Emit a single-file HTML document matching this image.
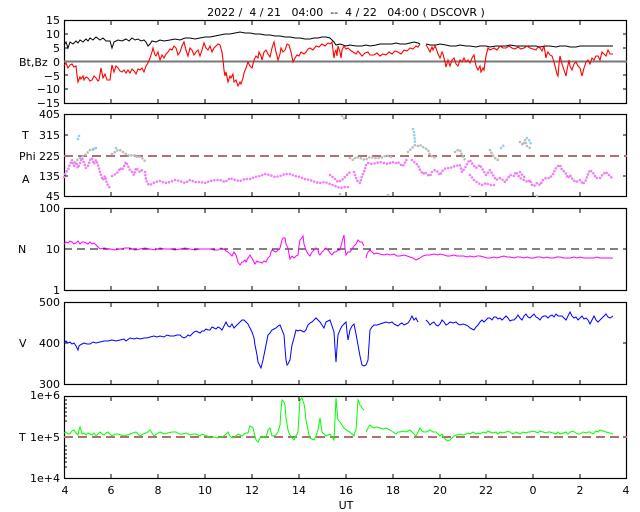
<!DOCTYPE html>
<html><head><meta charset="utf-8"><style>
html,body{margin:0;padding:0;background:#fff;}
svg{display:block;font-family:"DejaVu Sans","Liberation Sans",sans-serif;font-size:11px;}
</style></head><body>
<svg width="640" height="512" viewBox="0 0 640 512" xmlns="http://www.w3.org/2000/svg">
<text x="346" y="16" text-anchor="middle" fill="#000" style="white-space:pre" xml:space="preserve">2022 /  4 / 21   04:00  --  4 / 22   04:00 ( DSCOVR )</text>

<g fill="none" stroke="#000" stroke-width="1.2">
<rect x="64.5" y="20.5" width="562" height="83"/>
<rect x="64.5" y="114.5" width="562" height="82"/>
<rect x="64.5" y="208.5" width="562" height="82"/>
<rect x="64.5" y="302.5" width="562" height="82"/>
<rect x="64.5" y="396.5" width="562" height="82"/>
</g>
<g stroke="#000" stroke-width="1">
<path d="M111,20v5M158,20v5M205,20v5M252,20v5M299,20v5M346,20v5M393,20v5M440,20v5M486,20v5M533,20v5M580,20v5
M111,104v-5M158,104v-5M205,104v-5M252,104v-5M299,104v-5M346,104v-5M393,104v-5M440,104v-5M486,104v-5M533,104v-5M580,104v-5
M111,114v5M158,114v5M205,114v5M252,114v5M299,114v5M346,114v5M393,114v5M440,114v5M486,114v5M533,114v5M580,114v5
M111,197v-5M158,197v-5M205,197v-5M252,197v-5M299,197v-5M346,197v-5M393,197v-5M440,197v-5M486,197v-5M533,197v-5M580,197v-5
M111,208v5M158,208v5M205,208v5M252,208v5M299,208v5M346,208v5M393,208v5M440,208v5M486,208v5M533,208v5M580,208v5
M111,291v-5M158,291v-5M205,291v-5M252,291v-5M299,291v-5M346,291v-5M393,291v-5M440,291v-5M486,291v-5M533,291v-5M580,291v-5
M111,302v5M158,302v5M205,302v5M252,302v5M299,302v5M346,302v5M393,302v5M440,302v5M486,302v5M533,302v5M580,302v5
M111,385v-5M158,385v-5M205,385v-5M252,385v-5M299,385v-5M346,385v-5M393,385v-5M440,385v-5M486,385v-5M533,385v-5M580,385v-5
M111,396v5M158,396v5M205,396v5M252,396v5M299,396v5M346,396v5M393,396v5M440,396v5M486,396v5M533,396v5M580,396v5
M111,479v-5M158,479v-5M205,479v-5M252,479v-5M299,479v-5M346,479v-5M393,479v-5M440,479v-5M486,479v-5M533,479v-5M580,479v-5
M64,34h4M64,48h4M64,75h4M64,89h4M627,34h-4M627,48h-4M627,75h-4M627,89h-4
M64,135h4M64,176h4M627,135h-4M627,176h-4
M64,343h4M627,343h-4 M64,437h4M627,437h-4"/>
</g>
<g text-anchor="end" fill="#000">
<text x="60" y="24">15</text><text x="60" y="38">10</text><text x="60" y="52">5</text><text x="60" y="66">0</text><text x="60" y="80">−5</text><text x="60" y="93">−10</text><text x="60" y="107">−15</text>
<text x="60" y="118">405</text><text x="60" y="139">315</text><text x="60" y="160">225</text><text x="60" y="180">135</text><text x="60" y="200">45</text>
<text x="60" y="212">100</text><text x="60" y="253">10</text><text x="60" y="294">1</text>
<text x="60" y="306">500</text><text x="60" y="347">400</text><text x="60" y="388">300</text>
<text x="60" y="399">1e+6</text><text x="60" y="441">1e+5</text><text x="60" y="482">1e+4</text>
</g>
<g fill="#000">
<text x="19" y="66">Bt,Bz</text>
<text x="22" y="139">T</text><text x="19" y="160">Phi</text><text x="22" y="183">A</text>
<text x="18" y="253">N</text><text x="19" y="347">V</text><text x="19" y="441">T</text>
</g>
<g text-anchor="middle" fill="#000">
<text x="65" y="494">4</text><text x="111" y="494">6</text><text x="158" y="494">8</text><text x="205" y="494">10</text><text x="252" y="494">12</text><text x="299" y="494">14</text><text x="346" y="494">16</text><text x="393" y="494">18</text><text x="440" y="494">20</text><text x="486" y="494">22</text><text x="533" y="494">0</text><text x="580" y="494">2</text><text x="626" y="494">4</text>
<text x="346" y="509">UT</text>
</g>

<!-- panel 1 -->
<line x1="64" y1="61.5" x2="627" y2="61.5" stroke="#777" stroke-width="2"/>
<polyline fill="none" stroke="#000" stroke-width="1" points="64,45 66,42 68,48 70,42 73,44 76,41 78,43 80,40 83,42 86,39 88,41 90,38 93,40 96,37 100,40 103,38 106,41 110,41 112,48 114,42 118,40 122,41 126,39 129,41 132,38 135,40 138,39 141,41 144,40 146,42 148,46 150,44 152,41 156,42 160,40 164,41 170,40 175,39 180,40 185,38 190,38 195,39 200,38 205,37 210,37 215,36 220,35 225,34 230,34 235,33 240,32 245,33 250,33 255,34 260,34 265,35 270,35 275,36 280,36 285,37 290,37 295,38 300,38 305,39 310,39 314,38 318,38 322,37 326,37 330,38 332,40 334,42 336,45 340,44 346,46 350,45 356,46 362,46 366,45 370,46 376,45 380,44 386,44 392,44 396,43 400,44 406,44 410,43 414,42 418,43 420,44"/>
<polyline fill="none" stroke="#000" stroke-width="1" points="426,44 430,45 436,45 440,44 446,45 450,46 456,46 460,45 466,46 470,46 476,47 480,46 486,46 490,47 496,46 500,46 506,46 510,45 516,46 520,46 526,46 530,46 536,46 540,47 546,46 550,46 556,47 560,46 566,46 570,47 576,47 580,46 586,46 590,46 596,46 600,46 606,46 613,46"/>
<polyline fill="none" stroke="#f00" stroke-width="1.1" points="64,66 66,63 68,68 70,65 72,64 74,67 76,66 77,75 78,82 80,77 81,79 83,76 84,80 86,77 88,78 90,81 92,80 94,76 96,78 98,81 99,80 101,68 103,78 105,74 107,80 110,80 111,72 112,65 114,72 116,66 118,68 120,71 122,72 124,70 126,73 128,70 130,73 132,69 134,71 136,74 138,69 140,70 142,68 144,72 146,66 148,63 150,58 152,52 153,48 155,55 156,56 158,52 160,60 162,55 164,58 166,54 168,52 170,49 172,50 174,46 176,48 178,55 180,52 182,46 184,42 186,50 188,56 190,48 192,50 194,55 196,52 198,50 200,56 202,50 204,43 206,48 208,50 210,46 212,52 214,48 216,46 218,44 220,45 222,52 223,60 224,70 225,76 226,72 228,82 230,76 231,78 233,74 234,82 236,80 238,86 240,82 241,84 243,78 244,73 246,68 248,62 250,66 252,68 254,60 256,56 258,58 259,52 261,56 262,60 264,52 266,50 268,54 270,57 272,48 274,42 276,52 278,60 280,54 281,48 283,52 285,50 287,44 289,45 291,52 293,62 295,58 297,55 299,56 301,52 304,54 306,52 308,49 310,48 313,50 316,46 319,47 322,44 325,46 328,43 330,44 332,42 333,50 334,58 335,52 336,50 337,56 338,46 340,52 341,58 342,50 344,46 346,49 348,48 350,50 353,52 356,54 358,51 362,56 365,53 368,52 370,55 374,55 377,53 380,56 383,54 386,55 389,52 392,54 395,51 398,52 401,54 404,50 407,51 410,48 413,49 416,46 418,47 420,44"/>
<polyline fill="none" stroke="#f00" stroke-width="1.1" points="426,45 428,48 430,52 432,47 433,50 435,46 436,48 438,54 440,58 442,52 443,54 445,62 446,67 448,60 450,66 452,60 454,58 456,64 458,66 460,60 462,62 464,58 466,62 468,60 470,63 472,58 474,55 476,66 478,70 480,66 481,72 483,68 484,70 486,56 488,48 490,50 494,48 497,50 500,46 503,48 506,48 509,46 512,48 515,49 518,47 521,49 524,48 527,46 530,48 533,49 536,50 538,47 540,48 542,51 544,46 545,52 546,58 547,54 548,52 550,55 552,56 554,62 556,70 557,74 558,76 559,64 560,56 561,60 562,64 564,70 566,76 567,70 569,60 570,66 572,70 574,64 576,62 578,66 580,68 581,72 582,76 584,68 586,62 588,60 590,64 592,58 594,60 596,56 598,56 600,60 602,52 604,54 606,56 608,50 610,54 613,54"/>

<!-- panel 2 -->
<line x1="64" y1="156" x2="627" y2="156" stroke="#b07070" stroke-width="2" stroke-dasharray="9 5"/>
<g fill="none" stroke-width="2.6" stroke-dasharray="0 3.2" stroke-linecap="round">
<polyline stroke="#f080f8" points="64,177 66,172 68,170 70,164 72,160 74,166 76,162 78,168 80,163 82,158 84,163 86,168 88,166 90,160 92,158 94,164 96,160 98,165 100,172 102,178 103,180 105,176 107,184 109,186 110,190"/>
<polyline stroke="#f080f8" points="112,176 114,175 118,172 120,168 122,170 124,166 126,162 128,166 130,170 132,172 134,175 136,168 138,170 140,172 142,170"/>
<polyline stroke="#f080f8" points="145,172 146,180 148,184 150,185 155,182 160,181 165,183 170,182 175,180 180,181 185,183 190,180 195,182 200,182 205,183 210,181 215,180 220,180 225,182 230,178 235,180 240,181 245,179 250,179 255,177 260,176 265,174 270,175 275,177 280,176 285,174 290,174 295,176 300,177 305,179 310,180 315,182 320,183 325,182 330,184 335,186 340,188 345,187 350,187"/>
<polyline stroke="#f080f8" points="330,175 334,178 338,182 342,180 346,176 350,172"/>
<polyline stroke="#f080f8" points="354,172 356,178 358,182 360,183 362,176 364,172 366,165 368,163 372,164 376,163 380,162 384,163 388,164 392,162 396,163 398,162 402,166 404,165 406,160 408,160"/>
<polyline stroke="#f080f8" points="412,160 415,163 418,165 420,170 423,174 425,172 428,175 430,176 432,172 435,170 438,172 440,175 443,170 446,168 450,168 455,166 460,165 462,172 465,168 468,162 470,160 473,165 476,168 480,165 483,170 486,175 490,170 493,175 496,180 500,178 503,180 505,182 508,178 510,175 514,176 516,172 520,178 524,180 528,182 530,180 532,185 534,186 537,183 540,185 543,180 546,178 550,178 553,174 556,168 558,166 560,165 562,170 565,172 568,178 570,175 573,180 576,182 580,180 583,184 586,180 588,174 590,170 594,174 596,178 600,178 603,174 606,172 609,175 612,178"/>
<polyline stroke="#f080f8" points="470,175 474,180 478,183 482,185 486,183 490,185 495,185"/>
<polyline stroke="#f080f8" points="520,172 523,176 526,178"/>
<polyline stroke="#bbb" points="75,162 77,160 80,158 83,156 85,155 88,152 90,150 93,149 96,148"/>
<polyline stroke="#bbb" points="112,154 115,152 118,150 120,150 123,152 126,154 128,155 130,156 132,155 134,155 136,157 138,156 140,157 142,158 144,160 146,162"/>
<polyline stroke="#bbb" points="350,158 353,160 356,157 360,158 365,160 370,157 375,158 380,158 383,157 385,156 388,156 392,157"/>
<polyline stroke="#bbb" points="408,152 410,150 412,148 415,145 418,146 420,145 423,147 425,148 428,150 430,155 433,157 436,158"/>
<polyline stroke="#bbb" points="455,152 458,150 460,150 462,155 465,160"/>
<polyline stroke="#bbb" points="490,150 492,154 495,158 498,160"/>
<polyline stroke="#bbb" points="520,142 523,145 525,140 527,146 530,148"/>
<polyline stroke="#bbb" points="342,116 344,118 345,120"/>
<polyline stroke="#90d0f0" points="78,139 79,136 81,134"/>
<polyline stroke="#90d0f0" points="93,150 95,148 97,150"/>
<polyline stroke="#90d0f0" points="116,148 118,146"/>
<polyline stroke="#90d0f0" points="413,129 414,132 415,142"/>
<polyline stroke="#90d0f0" points="501,148 503,146 505,144"/>
<polyline stroke="#90d0f0" points="527,138 529,140 531,144"/>
</g>
<g fill="#bbb"><circle cx="340" cy="194" r="1.3"/><circle cx="470" cy="196" r="1.3"/><circle cx="537" cy="196" r="1.3"/><circle cx="388" cy="195" r="1.3"/></g>

<!-- panel 3 -->
<line x1="64" y1="249" x2="627" y2="249" stroke="#000" stroke-width="1" stroke-dasharray="8 5"/>
<polyline fill="none" stroke="#f0f" stroke-width="1" points="64,244 66,242 68,243 70,241 72,242 74,244 76,243 78,241 80,244 82,242 84,242 86,243 88,244 90,242 92,244 94,243 96,245 98,247 100,249 104,248 110,249 115,250 120,249 125,248 130,248 135,250 140,249 145,248 150,249 155,250 160,248 165,249 170,249 175,250 180,249 185,248 190,249 195,250 200,249 205,249 210,249 214,250 218,250 221,248 224,249 226,251 228,252 230,254 232,256 234,252 236,255 238,262 240,265 242,262 243,262 245,260 246,262 248,258 250,255 251,257 252,258 254,262 255,264 257,261 258,262 260,262 262,263 264,261 266,262 268,258 270,256 271,252 272,250 274,251 276,252 278,250 280,248 281,244 282,240 283,238 285,238 286,244 288,248 289,254 290,259 292,256 294,258 296,256 298,255 299,246 300,240 302,238 303,236 304,244 306,250 308,254 310,256 312,252 314,250 316,248 318,250 319,254 320,255 322,252 324,250 326,248 328,250 330,253 332,255 334,252 336,252 338,250 340,250 341,246 342,242 343,238 344,235 345,248 346,255 348,252 350,252 352,249 354,246 356,244 358,240 360,242 362,242 363,244 364,246"/>
<polyline fill="none" stroke="#f0f" stroke-width="1" points="366,258 367,254 368,252 370,250 372,252 374,254 377,253 380,254 384,255 387,254 390,255 394,254 397,256 400,256 404,255 407,256 410,257 413,258 416,260 418,259 420,258 423,256 426,255 430,255 434,254 438,255 440,254 444,255 447,256 450,256 454,255 457,256 460,256 464,256 467,257 470,256 474,257 477,256 480,256 484,257 487,258 490,258 494,257 497,258 500,257 504,256 507,257 510,257 514,258 517,257 520,257 524,258 527,257 530,258 534,258 537,257 540,257 544,258 547,257 550,258 554,258 557,257 560,257 564,258 567,258 570,258 574,257 577,258 580,257 584,258 587,258 590,258 594,258 597,257 600,258 606,258 613,258"/>

<!-- panel 4 -->
<polyline fill="none" stroke="#00f" stroke-width="1" points="64,343 66,341 68,343 70,342 72,344 74,343 76,346 77,348 78,350 79,346 80,345 82,344 84,343 87,344 90,344 93,342 96,343 100,342 104,341 108,341 112,340 116,341 120,340 124,339 126,341 130,338 134,339 137,338 140,339 144,338 147,338 150,337 154,336 157,337 160,336 164,337 167,335 170,336 174,336 177,335 180,335 182,337 184,338 186,337 188,335 190,336 192,334 194,332 196,331 198,332 200,333 202,331 204,331 206,329 208,330 210,330 212,327 214,328 216,329 218,327 220,328 222,330 224,326 226,322 228,326 230,327 232,324 234,328 236,326 238,324 240,322 242,320 244,320 246,322 248,324 250,328 252,332 254,338 255,345 257,355 258,362 260,366 261,368 263,360 264,355 266,345 268,335 270,333 272,330 274,329 276,328 278,326 280,325 282,330 284,335 285,348 286,360 287,365 288,364 290,360 291,352 292,345 294,338 296,330 298,331 300,330 302,331 304,332 305,331 306,330 307,327 308,325 310,323 312,322 314,320 316,318 318,320 320,322 322,325 324,328 325,325 326,322 328,321 330,320 332,326 334,332 335,348 336,362 337,348 338,335 340,330 342,326 344,324 346,322 347,332 348,340 349,335 350,330 352,326 354,324 356,334 358,345 360,356 362,365 364,366 366,365 368,360 369,345 370,330 372,327 374,325 377,325 380,324 383,323 386,322 389,323 392,322 394,324 396,325 398,326 400,324 402,323 404,325 406,324 408,323 410,320 412,316 413,318 414,320 415,319 416,318 418,322"/>
<polyline fill="none" stroke="#00f" stroke-width="1" points="426,320 428,322 430,325 432,323 434,322 436,325 438,326 440,324 442,320 444,322 446,325 448,324 450,322 453,323 456,322 458,324 460,325 463,324 466,325 468,326 470,328 472,329 474,330 476,327 478,325 480,322 482,320 484,322 486,320 488,318 490,318 492,320 494,317 496,317 498,319 500,318 502,320 504,318 506,316 508,318 510,321 512,320 514,320 516,318 518,315 520,318 522,320 524,316 526,314 528,317 530,318 532,316 534,314 536,317 538,318 540,320 542,317 544,316 546,316 548,318 550,316 552,315 554,317 556,314 558,316 560,316 562,316 564,318 566,320 568,316 570,312 572,316 574,318 576,317 578,320 580,318 582,316 584,319 586,318 588,320 590,324 592,320 594,316 596,320 598,322 600,320 602,318 604,316 606,314 608,317 610,318 613,316"/>

<!-- panel 5 -->
<line x1="64" y1="437" x2="627" y2="437" stroke="#b07070" stroke-width="2" stroke-dasharray="9 5"/>
<polyline fill="none" stroke="#0f0" stroke-width="1" points="64,433 66,432 68,434 70,434 72,431 74,430 76,433 78,435 79,430 80,427 81,430 82,434 84,433 86,435 88,433 90,434 92,435 94,433 96,436 98,434 100,432 102,434 104,435 106,433 108,432 110,434 112,436 115,434 118,434 121,435 124,436 127,435 130,434 133,433 136,432 138,434 140,436 143,434 146,433 148,432 150,430 152,433 154,436 157,434 160,432 164,434 168,433 172,432 176,432 179,434 182,434 186,433 190,435 193,434 196,434 198,435 200,436 202,434 204,435 207,436 210,438 214,437 218,438 221,437 224,436 226,434 228,432 230,436 232,438 234,437 236,436 238,434 240,435 242,436 244,434 246,433 248,433 249,429 250,426 252,427 253,428 255,436 256,440 257,441 258,442 259,440 260,438 261,437 262,436 264,437 266,438 267,434 268,430 269,429 270,428 271,432 272,436 274,436 276,435 278,432 280,425 281,410 282,400 284,402 285,405 286,418 288,430 289,433 290,435 292,438 294,440 296,436 298,432 299,415 300,400 301,399 302,398 304,404 305,410 306,420 308,430 309,435 310,438 312,439 314,440 316,436 318,430 319,424 320,418 321,425 322,432 324,434 326,436 328,435 330,434 332,437 334,440 335,420 336,398 337,410 338,420 340,422 342,425 344,428 346,430 348,431 350,432 352,434 354,436 355,432 356,430 357,415 358,400 359,402 360,405 361,406 362,408 363,409 364,410"/>
<polyline fill="none" stroke="#0f0" stroke-width="1" points="366,432 368,428 370,425 372,427 374,428 377,427 380,428 383,429 386,428 388,429 390,430 393,432 396,434 398,432 400,432 403,431 406,432 408,431 410,430 412,432 414,434 416,436 418,432 420,428 422,431 424,432 426,432 428,431 430,430 433,432 436,432 438,434 440,436 442,434 444,438 446,440 448,441 450,440 452,438 454,436 457,435 460,434 463,435 466,434 468,433 470,434 473,432 476,434 478,433 480,434 483,432 486,433 488,431 490,432 493,433 496,432 498,434 500,432 503,433 506,432 508,431 510,432 513,434 516,432 518,433 520,434 523,432 526,433 528,432 530,432 533,431 536,432 538,433 540,431 543,432 546,433 548,432 550,432 553,433 556,434 558,432 560,434 563,433 566,432 568,434 570,432 573,431 576,433 578,434 580,434 583,432 586,433 588,432 590,432 593,434 596,431 598,432 600,430 603,431 606,432 610,433 613,434"/>
<g stroke="#000" stroke-width="1">
<path d="M64,400h3M64,404h3M64,408h3M64,412h3M64,416h3M64,421h3M64,446h3M64,450h3M64,454h3M64,458h3M64,462h3M64,467h3"/>
</g>
</svg>
</body></html>
